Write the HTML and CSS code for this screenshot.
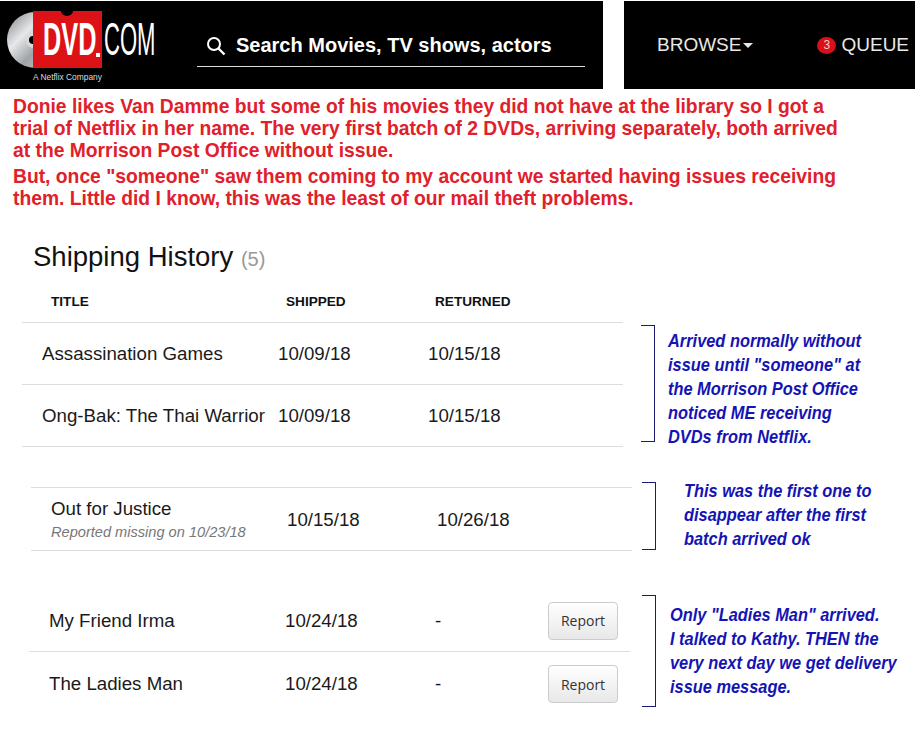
FILE: index.html
```html
<!DOCTYPE html>
<html lang="en">
<head>
<meta charset="utf-8">
<title>DVD.com Shipping History</title>
<link rel="stylesheet" href="styles.css">
</head>
<body>
<header class="top">
  <div class="bar bar-main">
    <div class="logo">
      <svg class="logo-art" width="160" height="88" viewBox="0 0 160 88" aria-hidden="true">
        <defs>
          <linearGradient id="disc" x1="0" y1="0" x2="1" y2="1">
            <stop offset="0" stop-color="#7d7f82"/>
            <stop offset="0.35" stop-color="#e6e8ea"/>
            <stop offset="0.6" stop-color="#9fa4a8"/>
            <stop offset="1" stop-color="#d6d8da"/>
          </linearGradient>
        </defs>
        <circle cx="35" cy="39" r="28" fill="url(#disc)"/>
        <circle cx="34" cy="39" r="8" fill="#d8dadc"/>
        <circle cx="33" cy="39" r="4" fill="#000"/>
        <path d="M33 10H61A6 5 0 0 0 73 10H102V67H33Z" fill="#dd1216"/>
        <rect x="96" y="52" width="4" height="4" fill="#fff"/>
      </svg>
      <span class="logo-dvd">DVD</span>
      <span class="logo-com">COM</span>
      <span class="logo-sub">A Netflix Company</span>
    </div>
    <div class="search">
      <svg width="20" height="20" viewBox="0 0 20 20" aria-hidden="true"><circle cx="8" cy="8" r="6" fill="none" stroke="#fff" stroke-width="2"/><path d="M12.5 12.5L18.5 18.5" stroke="#fff" stroke-width="2.4"/></svg>
      <span>Search Movies, TV shows, actors</span>
    </div>
  </div>
  <nav class="bar bar-nav">
    <span class="nav-browse">BROWSE<i class="caret"></i></span>
    <span class="nav-queue"><b class="badge">3</b>QUEUE</span>
  </nav>
</header>

<section class="story">
  <p>Donie likes Van Damme but some of his movies they did not have at the library so I got a<br>trial of Netflix in her name. The very first batch of 2 DVDs, arriving separately, both arrived<br>at the Morrison Post Office without issue.</p>
  <p class="story-b">But, once "someone" saw them coming to my account we started having issues receiving<br>them. Little did I know, this was the least of our mail theft problems.</p>
</section>

<h1 class="title">Shipping History <span class="count">(5)</span></h1>

<div class="thead">
  <span>TITLE</span><span>SHIPPED</span><span>RETURNED</span>
</div>

<section class="group group-1">
  <div class="table">
    <div class="row row-top"><span>Assassination Games</span><span>10/09/18</span><span>10/15/18</span></div>
    <div class="row"><span>Ong-Bak: The Thai Warrior</span><span>10/09/18</span><span>10/15/18</span></div>
  </div>
  <i class="bracket"></i>
  <p class="note">Arrived normally without<br>issue until "someone" at<br>the Morrison Post Office<br>noticed ME receiving<br>DVDs from Netflix.</p>
</section>

<section class="group group-2">
  <div class="table">
    <div class="row row-top row-tall"><span class="cell-title">Out for Justice<small>Reported missing on 10/23/18</small></span><span>10/15/18</span><span>10/26/18</span></div>
  </div>
  <i class="bracket"></i>
  <p class="note">This was the first one to<br>disappear after the first<br>batch arrived ok</p>
</section>

<section class="group group-3">
  <div class="table">
    <div class="row"><span>My Friend Irma</span><span>10/24/18</span><span>-</span><button class="report">Report</button></div>
    <div class="row row-last"><span>The Ladies Man</span><span>10/24/18</span><span>-</span><button class="report">Report</button></div>
  </div>
  <i class="bracket"></i>
  <p class="note">Only "Ladies Man" arrived.<br>I talked to Kathy. THEN the<br>very next day we get delivery<br>issue message.</p>
</section>
</body>
</html>
```
FILE: styles.css
```css
* { box-sizing: border-box; }
html, body { margin: 0; padding: 0; }
body {
  width: 915px;
  height: 746px;
  overflow: hidden;
  background: #fff;
  font-family: "Liberation Sans", Arial, sans-serif;
  color: #1a1a1a;
}
.top {
  display: flex;
  justify-content: space-between;
  height: 89px;
  margin-top: 1px;
}
.bar { background: #000; height: 88px; display: flex; align-items: center; }
.bar-main { width: 603px; position: relative; }
.bar-nav { width: 291px; color: #e8e8e8; font-size: 19px; padding-left: 33px; }
.logo { position: absolute; left: 0; top: 0; width: 160px; height: 88px; }
.logo-art { position: absolute; left: 0; top: 0; }
.logo-dvd {
  position: absolute;
  left: 43px;
  top: 13px;
  color: #fff;
  font: bold 46px/50px "Liberation Sans", sans-serif;
  transform: scaleX(.55);
  transform-origin: left;
}
.logo-com {
  position: absolute;
  left: 104px;
  top: 13px;
  color: #fff;
  font: 46px/50px "Liberation Sans", sans-serif;
  transform: scaleX(.48);
  transform-origin: left;
}
.logo-sub { position: absolute; left: 33px; top: 71px; color: #ddd; font-size: 8.4px; line-height: 10px; white-space: nowrap; }
.search {
  position: absolute;
  left: 197px;
  top: 24px;
  width: 388px;
  height: 42px;
  border-bottom: 1px solid #ddd;
  padding-left: 9px;
  display: flex;
  align-items: center;
  gap: 10px;
  color: #fff;
  font-weight: bold;
  font-size: 20px;
}
.nav-browse { display: inline-flex; align-items: center; }
.caret { display: inline-block; margin-left: 2px; border: 5px solid transparent; border-top-color: #e8e8e8; border-bottom: 0; }
.nav-queue { display: inline-flex; align-items: center; margin-left: 64px; }
.badge {
  width: 19px; height: 17px; margin-right: 5px;
  border-radius: 50%;
  background: #d9101a;
  color: #f3c6c6;
  font-size: 12px; font-weight: normal; line-height: 17px; text-align: center;
}
.story {
  margin: 6px 0 0 13px;
  color: #e0202a;
  font-weight: bold;
  font-size: 19.3px;
  line-height: 22px;
}
.story p { margin: 0; }
.story .story-b { margin-top: 4px; }
.title {
  margin: 29px 0 0 33px;
  font-weight: normal;
  font-size: 27.5px;
  line-height: 36px;
  color: #111;
}
.count { color: #999; font-size: 20px; }
.thead {
  display: grid;
  grid-template-columns: 235px 149px 1fr;
  margin: 17px 0 0 51px;
  width: 550px;
  font-size: 13.6px;
  font-weight: bold;
  line-height: 16px;
  color: #111;
}
.group { display: flex; position: relative; }
.group-1 { margin: 12px 0 0 22px; }
.group-2 { margin: 40px 0 0 31px; }
.group-3 { margin: 39px 0 0 29px; }
.table { width: 601px; }
.row {
  display: grid;
  grid-template-columns: 236px 150px 113px 70px;
  align-items: center;
  height: 62px;
  padding-left: 20px;
  border-bottom: 1px solid #ddd;
  font-size: 18.7px;
}
.row-top { border-top: 1px solid #ddd; height: 63px; }
.row-tall { height: 64px; padding-top: 1px; }
.row-last { border-bottom: 0; padding-top: 2px; }
.cell-title small { display: block; font-size: 14.6px; font-style: italic; color: #777; line-height: 20px; margin-top: 2px; }
.report {
  height: 38px;
  width: 70px;
  border: 1px solid #ccc;
  border-radius: 4px;
  background: linear-gradient(#fff, #e8e8e8);
  color: #333;
  font: 14px "Open Sans", sans-serif;
  padding: 0;
}
.bracket {
  display: block;
  position: absolute;
  top: 3px;
  width: 14px;
  border: 1.5px solid #1a1a70;
  border-left: 0;
}
.group-1 .bracket { left: 619px; height: 117px; }
.group-2 .bracket { left: 611px; top: -5px; height: 68px; }
.group-3 .bracket { left: 613px; top: 5px; height: 112px; }
.note {
  margin: 0;
  position: absolute;
  color: #1414b4;
  font-weight: bold;
  font-style: italic;
  font-size: 18px;
  line-height: 24px;
  white-space: nowrap;
  transform: scaleX(.91);
  transform-origin: left;
}
.group-1 .note { left: 646px; top: 7px; }
.group-2 .note { left: 653px; top: -8px; }
.group-3 .note { left: 641px; top: 13px; }
```
